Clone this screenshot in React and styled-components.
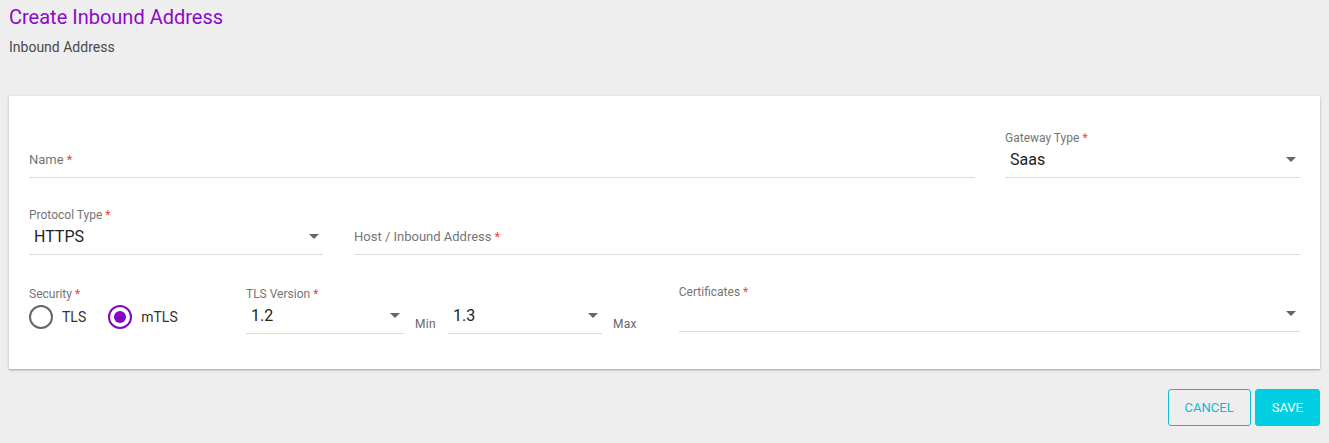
import styled, { createGlobalStyle } from "styled-components";

const GlobalStyle = createGlobalStyle`
  body {
    margin: 0;
    background: #eeeeee;
    font-family: Roboto, "Liberation Sans", sans-serif;
  }
`;

const Page = styled.div`
  padding: 4px 9px 18px 9px;
`;

const Title = styled.h1`
  margin: 0;
  font-size: 20px;
  line-height: 26px;
  font-weight: 400;
  color: #8e08c9;
`;

const Subtitle = styled.div`
  margin-top: 7px;
  font-size: 14px;
  line-height: 20px;
  color: #4a4a4a;
`;

const Card = styled.div`
  margin-top: 39px;
  background: #fff;
  box-shadow: 0 1px 3px rgba(0, 0, 0, 0.2), 0 1px 1px rgba(0, 0, 0, 0.12);
  padding: 32px 20px 35px 20px;
  display: flex;
  flex-direction: column;
`;

const Row = styled.div`
  display: grid;
  grid-template-columns: ${(p) => p.$cols};
  column-gap: ${(p) => p.$gap || 30}px;
  margin-top: ${(p) => p.$top || 0}px;
`;

const Field = styled.div`
  position: relative;
  box-sizing: border-box;
  height: 50px;
  display: flex;
  flex-direction: column;
  border-bottom: 1px solid #dcdcdc;
  width: ${(p) => (p.$w ? `${p.$w}px` : "auto")};
  flex: ${(p) => (p.$grow ? 1 : "none")};
`;

const SmallLabel = styled.div`
  padding-top: 2px;
  font-size: 12px;
  line-height: 16px;
  color: #757575;
`;

const BigLabel = styled.div`
  margin-top: 24px;
  font-size: 13px;
  line-height: 16px;
  color: #757575;
`;

const Star = styled.span`
  color: #f44336;
  margin-left: 3px;
`;

const Value = styled.div`
  height: 26px;
  display: flex;
  align-items: center;
  justify-content: space-between;
  padding: 0 4px 0 5px;
  font-size: 16px;
  color: #222;
`;

const Caret = styled.span`
  width: 0;
  height: 0;
  border-left: 5px solid transparent;
  border-right: 5px solid transparent;
  border-top: 5px solid #666;
`;

const ThirdRow = styled.div`
  margin-top: 29px;
  display: flex;
  align-items: flex-start;
`;

const Security = styled.div`
  width: 217px;
  display: flex;
  flex-direction: column;
`;

const RadioGroup = styled.div`
  display: flex;
  align-items: center;
  gap: 22px;
  height: 30px;
`;

const RadioOption = styled.label`
  display: flex;
  align-items: center;
  gap: 9px;
  font-size: 14px;
  color: #333;
`;

const Circle = styled.span`
  box-sizing: border-box;
  width: 24px;
  height: 24px;
  border-radius: 50%;
  border: 2px solid ${(p) => (p.$on ? "#8207c2" : "#666")};
  display: flex;
  align-items: center;
  justify-content: center;
  &::after {
    content: "";
    display: ${(p) => (p.$on ? "block" : "none")};
    width: 12px;
    height: 12px;
    border-radius: 50%;
    background: #8207c2;
  }
`;

const Unit = styled.span`
  align-self: flex-end;
  font-size: 12px;
  color: #666;
  margin: 0 12px 3px 11px;
  letter-spacing: 0.3px;
`;

const Certificates = styled(Field)`
  margin-left: 30px;
  margin-top: -2px;
`;

const Actions = styled.div`
  margin-top: 20px;
  display: flex;
  justify-content: flex-end;
  gap: 4px;
`;

const Button = styled.button`
  height: 37px;
  padding: 0 16px;
  font-family: inherit;
  font-size: 13px;
  text-transform: uppercase;
  border-radius: 3px;
  border: 1px solid ${(p) => (p.$primary ? "#00cfe2" : "#0fbad6")};
  background: ${(p) => (p.$primary ? "#00cfe2" : "transparent")};
  color: ${(p) => (p.$primary ? "#fff" : "#0fbad6")};
  cursor: pointer;
`;

function Select({ label, value, w, grow }) {
  return (
    <Field $w={w} $grow={grow}>
      <SmallLabel>
        {label}
        <Star>*</Star>
      </SmallLabel>
      <Value>
        <span>{value}</span>
        <Caret />
      </Value>
    </Field>
  );
}

function TextField({ label }) {
  return (
    <Field>
      <BigLabel>
        {label}
        <Star>*</Star>
      </BigLabel>
    </Field>
  );
}

export default function App() {
  return (
    <Page>
      <GlobalStyle />
      <Title>Create Inbound Address</Title>
      <Subtitle>Inbound Address</Subtitle>
      <Card>
        <Row $cols="1fr 295px">
          <TextField label="Name" />
          <Select label="Gateway Type" value="Saas" />
        </Row>
        <Row $cols="294px 1fr" $gap={31} $top={27}>
          <Select label="Protocol Type" value="HTTPS" />
          <TextField label="Host / Inbound Address" />
        </Row>
        <ThirdRow>
          <Security>
            <SmallLabel>
              Security<Star>*</Star>
            </SmallLabel>
            <RadioGroup>
              <RadioOption>
                <Circle />
                TLS
              </RadioOption>
              <RadioOption>
                <Circle $on />
                mTLS
              </RadioOption>
            </RadioGroup>
          </Security>
          <Select label="TLS Version" value="1.2" w={158} />
          <Unit>Min</Unit>
          <Field $w={154}>
            <SmallLabel>&nbsp;</SmallLabel>
            <Value>
              <span>1.3</span>
              <Caret />
            </Value>
          </Field>
          <Unit>Max</Unit>
          <Certificates $grow>
            <SmallLabel>
              Certificates<Star>*</Star>
            </SmallLabel>
            <Value>
              <span />
              <Caret />
            </Value>
          </Certificates>
        </ThirdRow>
      </Card>
      <Actions>
        <Button>Cancel</Button>
        <Button $primary>Save</Button>
      </Actions>
    </Page>
  );
}
